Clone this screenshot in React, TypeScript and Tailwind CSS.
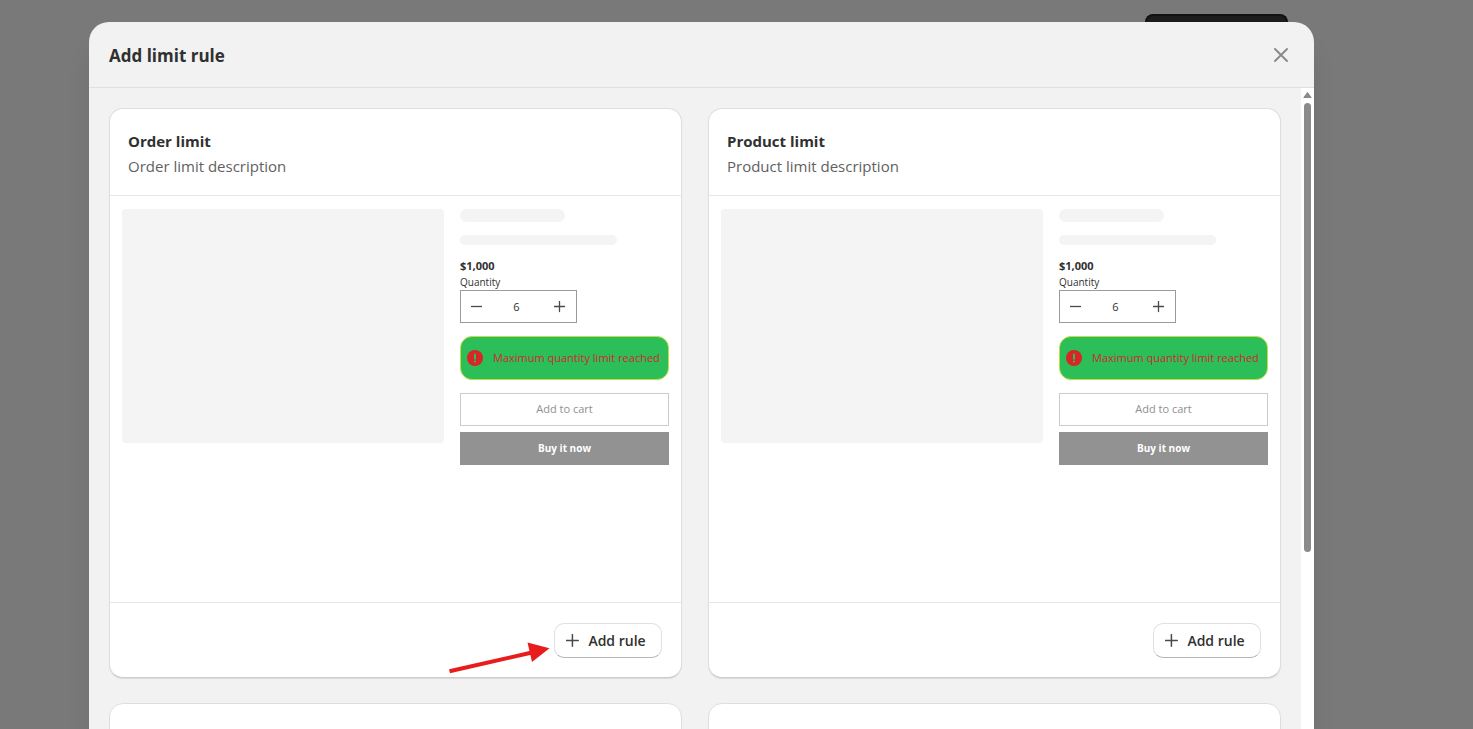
import type { ReactNode } from "react";

interface LimitCardProps {
    id: string;
    title: string;
    description: string;
    pointer?: ReactNode;
}

function PlusIcon({ className }: { className?: string }) {
    return (
        <svg viewBox="0 0 12 12" className={className} fill="none" stroke="currentColor" aria-hidden="true">
            <path d="M5.5 0.5v10M0.5 5.5h10" strokeWidth="1.3" strokeLinecap="round" />
        </svg>
    );
}

function PointerArrow() {
    return (
        <svg
            viewBox="0 0 108 40"
            className="pointer-events-none absolute right-full top-[13px] h-10 w-[108px] text-[#e81c1c]"
            aria-hidden="true"
        >
            <path d="M3.5 35.3L86 16.5" stroke="currentColor" strokeWidth="4" />
            <path d="M81.5 6.5L103.5 12.3L86 26Z" fill="currentColor" />
        </svg>
    );
}

function ProductPreview({ id }: { id: string }) {
    return (
        <div className="grid grid-cols-[322fr_209fr] items-start gap-4 px-3 pt-[13px]">
            <div className="h-[234px] rounded bg-[#f4f4f4]" />
            <div className="flex flex-col">
                <div className="h-[13px] w-1/2 rounded-full bg-[#f4f4f4]" />
                <div className="mt-[13px] h-[10px] w-3/4 rounded-full bg-[#f4f4f4]" />
                <p className="mt-[13px] text-[11px] leading-4 font-bold text-[#303030]">$1,000</p>
                <label htmlFor={`${id}-qty`} className="text-[10px] leading-4 text-[#303030]">
                    Quantity
                </label>
                <div className="flex h-[33px] w-[117px] items-center justify-between border border-[#9b9b9b] px-[10px] text-[#4a4a4a]">
                    <button type="button" aria-label="Decrease quantity">
                        <svg viewBox="0 0 12 12" className="size-3" fill="none" stroke="currentColor" aria-hidden="true">
                            <path d="M0 5.5h11" strokeWidth="1.3" />
                        </svg>
                    </button>
                    <input
                        id={`${id}-qty`}
                        type="text"
                        defaultValue="6"
                        className="w-8 bg-transparent pr-1 text-center text-[11px] leading-4 text-[#303030] outline-none"
                    />
                    <button type="button" aria-label="Increase quantity">
                        <PlusIcon className="size-3" />
                    </button>
                </div>
                <div className="mt-[13px] flex h-11 items-center gap-[10px] rounded-xl border border-[#c3dc3e] bg-[#2bbe59] px-[6px] text-[#cf2a2a]">
                    <svg viewBox="0 0 16 16" className="size-4 shrink-0" aria-hidden="true">
                        <circle cx="8" cy="8" r="8" fill="#d82626" />
                        <path d="M8 4.4v4.4" stroke="#2bbe59" strokeWidth="2" strokeLinecap="round" />
                        <circle cx="8" cy="11.5" r="1.1" fill="#2bbe59" />
                    </svg>
                    <span className="text-[11px] leading-4 whitespace-nowrap">Maximum quantity limit reached</span>
                </div>
                <button
                    type="button"
                    className="mt-[13px] h-[33px] border border-[#cccccc] bg-white pb-px text-[11px] leading-4 text-[#909090]"
                >
                    Add to cart
                </button>
                <button
                    type="button"
                    className="mt-[6px] h-[33px] bg-[#929292] pb-px text-[10px] leading-4 font-bold text-white"
                >
                    Buy it now
                </button>
            </div>
        </div>
    );
}

function LimitCard({ id, title, description, pointer }: LimitCardProps) {
    return (
        <section className="rounded-[14px] border border-[#dedede] border-b-[#cccccc] bg-white shadow-[0_1px_1px_rgba(0,0,0,0.1)]">
            <div className="border-b border-[#e6e6e6] px-[18px] pt-5 pb-4">
                <h3 className="text-[15px] leading-[25px] font-bold text-[#303030]">{title}</h3>
                <p className="text-[15px] leading-[25px] text-[#616161]">{description}</p>
            </div>
            <div className="min-h-[406px]">
                <ProductPreview id={id} />
            </div>
            <div className="flex justify-end border-t border-[#e6e6e6] px-[19px] pt-5 pb-[19px]">
                <div className="relative">
                    {pointer}
                    <button
                        type="button"
                        className="flex h-[35px] w-[108px] items-center justify-center gap-2 rounded-[10px] border border-[#e0e0e0] border-b-[#b5b5b5] bg-white pt-px pr-1 text-sm font-semibold text-[#303030]"
                    >
                        <PlusIcon className="size-[14px] text-[#4a4a4a]" />
                        Add rule
                    </button>
                </div>
            </div>
        </section>
    );
}

function Scrollbar() {
    return (
        <div className="flex w-[13px] shrink-0 flex-col items-center bg-white" aria-hidden="true">
            <svg viewBox="0 0 9 6" className="mt-1 mb-[5px] h-[6px] w-[9px] shrink-0">
                <path d="M4.5 0.5L8.2 5.5H0.8Z" fill="#8b8b8b" stroke="#8b8b8b" strokeLinejoin="round" />
            </svg>
            <div className="h-[70%] w-[7px] rounded-full bg-[#8b8b8b]" />
        </div>
    );
}

export default function App() {
    return (
        <div className="flex h-screen flex-col overflow-hidden bg-[#797979] pr-[159px] pl-[89px] font-['Open_Sans','Noto_Sans',sans-serif]">
            <div className="flex h-[22px] shrink-0 justify-end pt-[14px] pr-[26px]">
                <div className="w-[143px] rounded-t-lg border-2 border-b-0 border-[#111111] bg-[#1c1c1c]" />
            </div>
            <div
                role="dialog"
                aria-labelledby="dialog-title"
                className="flex min-h-0 flex-1 flex-col overflow-hidden rounded-t-[20px] bg-[#f2f2f2] shadow-[0_24px_24px_rgba(0,0,0,0.08)]"
            >
                <header className="flex h-[66px] shrink-0 items-center justify-between border-b border-[#e0e0e0] px-5">
                    <h2 id="dialog-title" className="pt-[2px] text-[17px] leading-6 font-bold text-[#303030]">
                        Add limit rule
                    </h2>
                    <button type="button" aria-label="Close" className="p-[6px] text-[#8a8a8a]">
                        <svg viewBox="0 0 14 14" className="size-[14px]" fill="none" stroke="currentColor" aria-hidden="true">
                            <path d="M1 1l12 12M13 1L1 13" strokeWidth="1.9" strokeLinecap="round" />
                        </svg>
                    </button>
                </header>
                <div className="flex min-h-0 flex-1">
                    <div className="grid flex-1 grid-cols-2 content-start gap-x-[26px] gap-y-[25px] overflow-hidden px-5 pt-5">
                        <LimitCard
                            id="order"
                            title="Order limit"
                            description="Order limit description"
                            pointer={<PointerArrow />}
                        />
                        <LimitCard id="product" title="Product limit" description="Product limit description" />
                        <div className="h-20 rounded-[14px] border border-[#dedede] bg-white" />
                        <div className="h-20 rounded-[14px] border border-[#dedede] bg-white" />
                    </div>
                    <Scrollbar />
                </div>
            </div>
        </div>
    );
}
